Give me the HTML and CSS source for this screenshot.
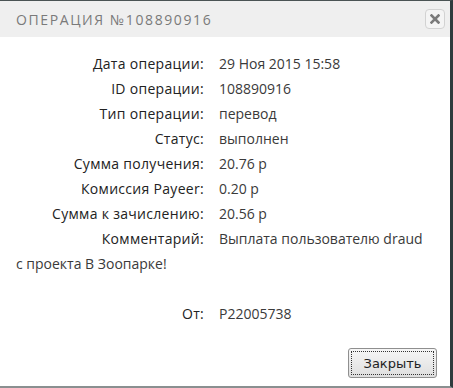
FILE: index.html
```html
<!DOCTYPE html>
<html lang="ru">
<head>
    <meta charset="UTF-8">
    <title>Операция №108890916</title>
    <link rel="stylesheet" href="styles.css">
</head>
<body>
    <div class="dialog">
        <div class="dialog-head">
            <span class="dialog-title">Операция №108890916</span>
            <button class="dialog-close" aria-label="Закрыть">
                <svg width="10" height="10" viewBox="0 0 10 10"><path d="M1.5 1.5 L8.5 8.5 M8.5 1.5 L1.5 8.5" stroke="#7a7a7a" stroke-width="2.6" stroke-linecap="square"/></svg>
            </button>
        </div>
        <div class="dialog-body">
            <div class="row"><span class="label">Дата операции:</span><span class="value">29 Ноя 2015 15:58</span></div>
            <div class="row"><span class="label">ID операции:</span><span class="value">108890916</span></div>
            <div class="row"><span class="label">Тип операции:</span><span class="value">перевод</span></div>
            <div class="row"><span class="label">Статус:</span><span class="value">выполнен</span></div>
            <div class="row"><span class="label">Сумма получения:</span><span class="value">20.76 р</span></div>
            <div class="row"><span class="label">Комиссия Payeer:</span><span class="value">0.20 р</span></div>
            <div class="row"><span class="label">Сумма к зачислению:</span><span class="value">20.56 р</span></div>
            <div class="row"><span class="label">Комментарий:</span><span class="value">Выплата пользователю draud с проекта В Зоопарке!</span></div>
            <div class="row empty">&nbsp;</div>
            <div class="row"><span class="label">От:</span><span class="value">P22005738</span></div>
        </div>
        <div class="dialog-foot">
            <button class="btn">Закрыть</button>
        </div>
    </div>
</body>
</html>
```

FILE: styles.css
```css
* {
    margin: 0;
    padding: 0;
    box-sizing: border-box;
}

body {
    background: #ffffff;
    font-family: 'Open Sans', sans-serif;
    color: #333;
}

.dialog {
    width: 453px;
    height: 388px;
    background: #fff;
    border-top: 1px solid #4a5354;
    border-right: 3px solid #2f3b3d;
    border-bottom: 2px solid #8a8f90;
    display: flex;
    flex-direction: column;
}

.dialog-head {
    height: 36px;
    background: #efefef;
    display: flex;
    align-items: center;
    justify-content: space-between;
    padding: 0 5px 0 16px;
}

.dialog-title {
    text-transform: uppercase;
    font-size: 14px;
    letter-spacing: 1.6px;
    color: #7a7a7a;
}

.dialog-close {
    width: 20px;
    height: 20px;
    border: 1px solid #d2d2d2;
    border-radius: 4px;
    background: #f4f4f4;
    display: flex;
    align-items: center;
    justify-content: center;
}

.dialog-body {
    flex: 1;
    padding: 14px 24px 0 16px;
    font-size: 14px;
    line-height: 25px;
}

.label {
    display: inline-block;
    width: 188px;
    text-align: right;
    margin-right: 15px;
    color: #222;
    letter-spacing: 0.3px;
}

.value {
    color: #3a3a3a;
}

.dialog-foot {
    display: flex;
    justify-content: flex-end;
    padding: 0 13px 8px 0;
}

.btn {
    width: 89px;
    height: 30px;
    font-family: 'DejaVu Sans', sans-serif;
    font-size: 13px;
    color: #222;
    border: 1px solid #8f8f8f;
    border-radius: 3px;
    background: linear-gradient(#f6f6f6, #dedede);
    outline: 1px dotted #333;
    outline-offset: -4px;
}
```
